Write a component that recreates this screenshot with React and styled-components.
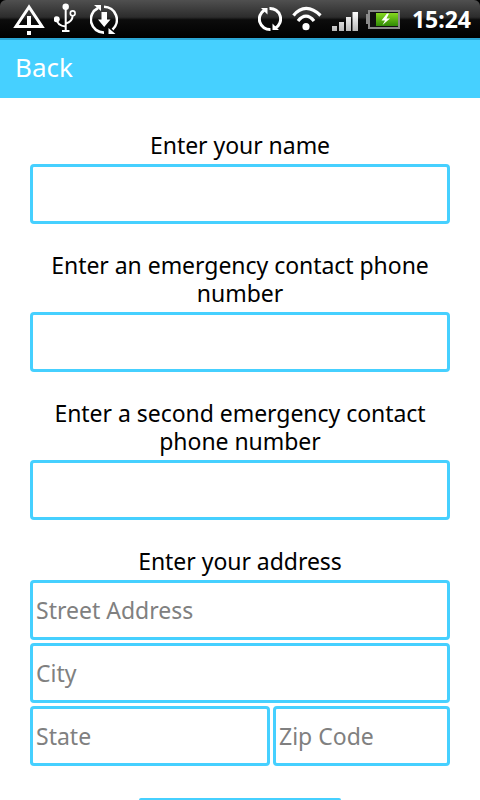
import React from 'react';
import styled, { createGlobalStyle } from 'styled-components';

const GlobalStyle = createGlobalStyle`
  html, body { margin: 0; padding: 0; background: #fff; }
  body { width: 480px; height: 800px; overflow: hidden; font-family: "Noto Sans", "Open Sans", sans-serif; }
  * { box-sizing: border-box; }
`;

const BLUE = '#46d0ff';

const Screen = styled.div`
  width: 480px;
  height: 800px;
  overflow: hidden;
  display: flex;
  flex-direction: column;
  background: #000;
`;

const StatusBar = styled.div`
  height: 38px;
  flex: none;
  display: flex;
  align-items: center;
  justify-content: space-between;
  border-radius: 6px 6px 0 0;
  background: linear-gradient(#505050 0%, #2c2c2c 45%, #0c0c0c 52%, #000 100%);
`;

const IconGroup = styled.div`
  display: flex;
  align-items: center;
`;

const StatusIcon = styled.svg`
  display: block;
  flex: none;
  height: 38px;
  margin-left: ${p => p.$gap}px;
`;

const Clock = styled.span`
  font-size: 23px;
  font-weight: 700;
  color: #fff;
  margin: 0 9px 0 12px;
`;

const TopBar = styled.div`
  height: 60px;
  flex: none;
  display: flex;
  align-items: center;
  padding: 0 0 4px 15px;
  background: ${BLUE};
  border-top: 2px solid #2aa6d4;
`;

const BackLabel = styled.span`
  font-size: 26px;
  color: #fff;
`;

const Form = styled.div`
  flex: 1;
  display: flex;
  flex-direction: column;
  padding: 33px 30px 0;
  background: #fff;
`;

const Section = styled.div`
  display: flex;
  flex-direction: column;
  margin-bottom: 27px;
`;

const Label = styled.div`
  font-size: 23px;
  line-height: 28px;
  letter-spacing: -0.04px;
  color: #000;
  text-align: center;
  padding-bottom: 5px;
`;

const Field = styled.input`
  display: block;
  width: ${p => p.$width || '100%'};
  min-width: 0;
  height: 60px;
  flex: none;
  padding: 0 3px;
  border: 3px solid ${BLUE};
  border-radius: 4px;
  background: #fff;
  outline: none;
  font-family: inherit;
  font-size: 23px;
  color: #000;
  &::placeholder { color: #808080; opacity: 1; }
`;

const AddressStack = styled.div`
  display: flex;
  flex-direction: column;
  gap: 3px;
`;

const FieldRow = styled.div`
  display: flex;
  gap: 3px;
`;

const SubmitButton = styled.div`
  align-self: center;
  flex: none;
  width: 202px;
  height: 60px;
  margin-top: 5px;
  border: 3px solid ${BLUE};
  border-radius: 2px;
`;

// the status icons use page coordinates in their viewBox, easier to read off the screenshot
const WarningIcon = () => (
  <StatusIcon $gap={13} width="33" viewBox="13 0 33 38">
    <path d="M29 7 L16 26.5 H42 Z" fill="none" stroke="#fff" strokeWidth="3" strokeLinejoin="miter" />
    <rect x="27" y="16" width="4" height="12" fill="#fff" />
    <rect x="27" y="31" width="4" height="4" fill="#fff" />
  </StatusIcon>
);

const UsbIcon = () => (
  <StatusIcon $gap={8} width="22" viewBox="54 0 22 38">
    <circle cx="65.7" cy="6.7" r="3.2" fill="#fff" />
    <path d="M65.7 8 V31 M62 31 H69.5" stroke="#fff" strokeWidth="2" fill="none" />
    <path d="M65.7 26.5 C60 26 57 24 56.7 19" stroke="#fff" strokeWidth="2" fill="none" />
    <circle cx="56.7" cy="19.3" r="3" fill="#fff" />
    <path d="M65.7 23.5 C70 22.5 72.5 20 72.7 15.5" stroke="#fff" strokeWidth="2" fill="none" />
    <circle cx="72.7" cy="13.3" r="2.4" fill="none" stroke="#fff" strokeWidth="1.6" />
  </StatusIcon>
);

const DownloadIcon = () => (
  <StatusIcon $gap={14} width="28" viewBox="90 0 28 38">
    <path d="M98 8 A13 13 0 0 0 104 32.6 M104 6.8 A13 13 0 0 1 112.5 29.5" fill="none" stroke="#fff" strokeWidth="2.6" />
    <path d="M94 5 H101 V11 Z M115.5 34 H108.5 V28 Z" fill="#fff" />
    <path d="M101.5 12 H107 V19.5 H110.5 L104.2 27 L98 19.5 H101.5 Z" fill="#fff" />
  </StatusIcon>
);

const SyncIcon = () => (
  <StatusIcon $gap={0} width="24" viewBox="259 0 24 38">
    <path d="M265.5 10 A10.5 10.5 0 0 0 271.5 29.5 M270.5 8.5 A10.5 10.5 0 0 1 276.5 28" fill="none" stroke="#fff" strokeWidth="3" />
    <path d="M262 8 H268.5 V14.5 Z M280 30 H273.5 V23.5 Z" fill="#fff" />
  </StatusIcon>
);

const WifiIcon = () => (
  <StatusIcon $gap={10} width="30" viewBox="293 0 30 38">
    <path d="M294.5 15.5 C302 6 312 6 321.5 15.5 M299 21 C304 14.5 310 14.5 315 21" fill="none" stroke="#fff" strokeWidth="3.2" />
    <circle cx="307" cy="26.7" r="3.6" fill="#fff" />
  </StatusIcon>
);

const SignalIcon = () => (
  <StatusIcon $gap={10} width="26" viewBox="333 0 26 38">
    <defs>
      <linearGradient id="sig" x1="0" y1="12" x2="0" y2="31" gradientUnits="userSpaceOnUse">
        <stop offset="0" stopColor="#fff" />
        <stop offset="1" stopColor="#b8b8b8" />
      </linearGradient>
    </defs>
    <rect x="333" y="26" width="5" height="5" fill="url(#sig)" />
    <rect x="340" y="22" width="5" height="9" fill="url(#sig)" />
    <rect x="347" y="17" width="5" height="14" fill="url(#sig)" />
    <rect x="353.5" y="12" width="5.5" height="19" fill="url(#sig)" />
  </StatusIcon>
);

const BatteryIcon = () => (
  <StatusIcon $gap={8} width="34" viewBox="367 0 34 38">
    <defs>
      <linearGradient id="bat" x1="0" y1="13" x2="0" y2="26" gradientUnits="userSpaceOnUse">
        <stop offset="0" stopColor="#86d81f" />
        <stop offset="1" stopColor="#2f8a06" />
      </linearGradient>
    </defs>
    <rect x="367" y="14" width="3" height="10" fill="#8a8a8a" />
    <rect x="370" y="11" width="30" height="17" fill="#111" stroke="#8a8a8a" strokeWidth="2" />
    <rect x="377" y="13" width="22" height="13" fill="url(#bat)" />
    <path d="M388 13.5 L382.5 20.5 H386 L383.5 25 L391 18.5 H387.5 L390 13.5 Z" fill="#fff" />
  </StatusIcon>
);

const App = () => {
  return (
    <>
      <GlobalStyle />
      <Screen>
        <StatusBar>
          <IconGroup>
            <WarningIcon />
            <UsbIcon />
            <DownloadIcon />
          </IconGroup>
          <IconGroup>
            <SyncIcon />
            <WifiIcon />
            <SignalIcon />
            <BatteryIcon />
            <Clock>15:24</Clock>
          </IconGroup>
        </StatusBar>
        <TopBar>
          <BackLabel>Back</BackLabel>
        </TopBar>
        <Form>
          <Section>
            <Label>Enter your name</Label>
            <Field />
          </Section>
          <Section>
            <Label>Enter an emergency contact phone number</Label>
            <Field />
          </Section>
          <Section>
            <Label>Enter a second emergency contact phone number</Label>
            <Field />
          </Section>
          <Section>
            <Label>Enter your address</Label>
            <AddressStack>
              <Field placeholder="Street Address" />
              <Field placeholder="City" />
              <FieldRow>
                <Field $width="240px" placeholder="State" />
                <Field $width="177px" placeholder="Zip Code" />
              </FieldRow>
            </AddressStack>
          </Section>
          <SubmitButton />
        </Form>
      </Screen>
    </>
  );
};

export default App;
